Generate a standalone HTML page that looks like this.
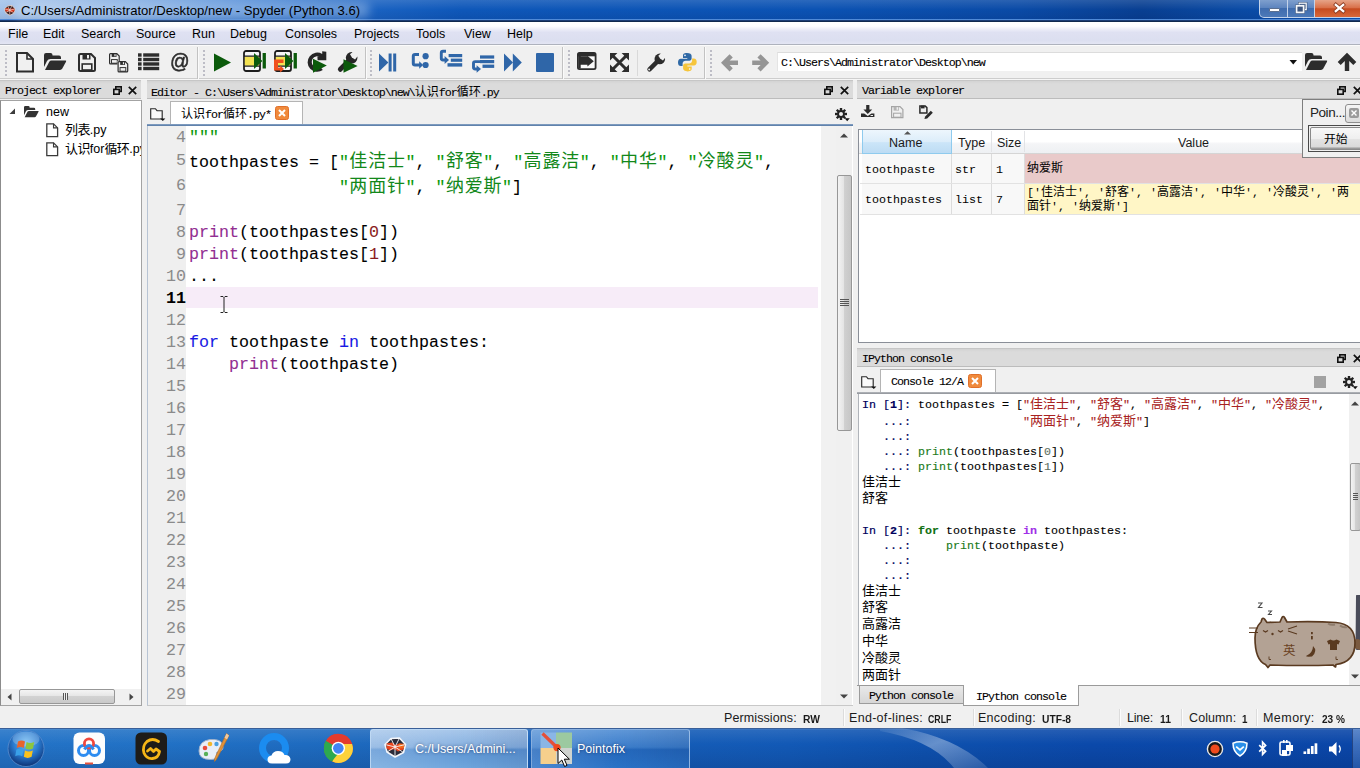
<!DOCTYPE html>
<html><head><meta charset="utf-8"><title>Spyder</title>
<style>

*{box-sizing:border-box;margin:0;padding:0}
html,body{width:1360px;height:768px;overflow:hidden;background:#f0f0f0;font-family:"Liberation Sans",sans-serif;font-size:12px;color:#000}
body{position:relative}
.a{position:absolute}
.t{position:absolute;white-space:pre;line-height:1}
svg{overflow:visible}
.cj{font-family:"Liberation Sans","Noto Sans CJK SC",sans-serif;font-weight:normal;-webkit-text-stroke:0}
.ss{font-family:"Liberation Mono",monospace;font-size:11.67px;letter-spacing:-1px;color:#000;-webkit-text-stroke:0.1px #000}
.ss .cj{font-size:12px;letter-spacing:0}
.pt{position:absolute;height:19px;background:linear-gradient(180deg,#d3d3d3 0,#dbdbdb 3px,#dbdbdb 100%);border-top:1px solid #c6c6c6;border-bottom:1px solid #bcbcbc}
.pt .t{top:5px}
.mono{font-family:"Liberation Mono",monospace}
.ln{-webkit-text-stroke:0.08px currentColor;position:absolute;left:189px;height:22px;line-height:22px;white-space:pre;font-family:"Liberation Mono",monospace;font-size:16.67px;color:#000}
.ln .cj{font-size:18px;letter-spacing:0.84px;margin-left:0.42px;margin-right:-0.42px;color:#12881a}
.num{position:absolute;left:148px;width:38px;text-align:right;height:22px;line-height:22px;font-family:"Liberation Mono",monospace;font-size:16.67px;color:#8a8a8a}
.s{color:#0a9a0a}.k{color:#1818e4}.b{color:#922e92}.n{color:#8a1c1c}
.cl{-webkit-text-stroke:0.12px currentColor;position:absolute;left:862px;height:15px;line-height:15px;white-space:pre;font-family:"Liberation Mono",monospace;font-size:11.67px;color:#000}
.cl .cj{font-size:13px}
.cp{color:#00005c;-webkit-text-stroke:0.2px #00005c}.cs{color:#a82222}.cb{color:#1a7a1a}.ck{color:#0f6f0f;font-weight:bold}.co{color:#a030e8;font-weight:bold}.cn{color:#5f6f5f}
.sb{position:absolute;top:711px;font-size:12.5px;white-space:pre;line-height:14px;color:#1a1a1a}
.sb b{font-weight:bold;font-size:11.4px}
.vc{position:absolute;font-family:"Liberation Mono",monospace;font-size:11.67px;white-space:pre;line-height:14px}
.vc .cj{font-size:12px}

.u.cj{font-size:13px;letter-spacing:-0.6px}
.ui{line-height:16px !important}

.pf.cj{font-size:11.8px}

.yc.cj{font-size:12.5px}

</style></head>
<body>
<div class="a" style="left:0;top:0;width:1360px;height:22px;background:linear-gradient(90deg,#a4c3ea 0%,#8db4e5 5%,#6a9ddd 12%,#3f80d3 19%,#1c64c3 26%,#0e57b9 34%,#0b52b3 60%,#0a4aa6 75%,#083f92 84%,#0a4aa4 91%,#0b53b5 100%)"></div><div class="a" style="left:0;top:0;width:1360px;height:22px;background:linear-gradient(180deg,rgba(255,255,255,.13) 0%,rgba(255,255,255,0) 45%,rgba(0,0,40,.10) 100%)"></div><div class="a" style="left:0;top:19px;width:1360px;height:1px;background:#4f8ad8"></div><div class="a" style="left:0;top:20px;width:1360px;height:1px;background:#1b3c74"></div><div class="a" style="left:0;top:21px;width:1360px;height:1px;background:#10294f"></div><div class="a" style="left:14px;top:2px;width:356px;height:16px;border-radius:8px;background:rgba(255,255,255,.30);filter:blur(5px)"></div><svg class="a" style="left:4px;top:5px" width="12" height="12"><g transform="scale(0.52)"><path d="M7 1.5L15.5 1L21.5 7.5L19.5 15.5L11 20L3 15L1 7.5Z" fill="#3a2020" stroke="#e9d8d4" stroke-width="1.6"/><path d="M2.5 6.5L8 5.5L11.5 8L15 6.5L20.5 7L19.5 12.5L14 14.5L10.5 12L6 13.5L2.5 11.5Z" fill="#d8381a"/><path d="M11 10L7 1.5M11 10L15.5 1M11 10L21.5 7.5M11 10L19.5 15.5M11 10L11 20M11 10L3 15M11 10L1 7.5" stroke="#f0e4e0" stroke-width="1.2" fill="none"/></g></svg><div class="t" id="title" style="left:21px;top:4px;font-size:13.1px;color:#000">C:/Users/Administrator/Desktop/new - Spyder (Python 3.6)</div><div class="a" style="left:1259px;top:0;width:101px;height:18px;border:1px solid #c3d3ea;border-top:none;border-radius:0 0 0 5px;background:linear-gradient(180deg,#7f9fcd 0%,#5d85bf 45%,#3f6cae 50%,#4d79b8 100%)"></div><div class="a" style="left:1287px;top:0;width:1px;height:17px;background:#c3d3ea"></div><div class="a" style="left:1314px;top:0;width:1px;height:17px;background:#c3d3ea"></div><div class="a" style="left:1315px;top:0;width:45px;height:17px;background:linear-gradient(180deg,#e6a488 0%,#d9714a 45%,#c64b1f 52%,#d8683a 100%)"></div><div class="a" style="left:1269px;top:8px;width:11px;height:4px;background:#fff;border:1px solid #5b6f8f;border-radius:1px"></div><svg class="a" style="left:1295px;top:2px" width="13" height="12"><rect x="4.2" y="1.2" width="7" height="6.4" fill="none" stroke="#3f5578" stroke-width="2.4"/><rect x="4.2" y="1.2" width="7" height="6.4" fill="none" stroke="#f4f7fb" stroke-width="1.3"/><rect x="1.6" y="3.8" width="7" height="6.6" fill="#3d5782" stroke="#3f5578" stroke-width="2.6"/><rect x="1.6" y="3.8" width="7" height="6.6" fill="none" stroke="#f4f7fb" stroke-width="1.7"/></svg><svg class="a" style="left:1334px;top:3px" width="11" height="10"><path d="M1.8 1.8L9.2 8.2M9.2 1.8L1.8 8.2" stroke="#8a3a20" stroke-width="3.8" stroke-linecap="square"/><path d="M1.8 1.8L9.2 8.2M9.2 1.8L1.8 8.2" stroke="#fff" stroke-width="2.3" stroke-linecap="square"/></svg><div class="a" style="left:0;top:22px;width:1360px;height:23px;background:linear-gradient(180deg,#fff 0%,#fdfdff 18%,#ecedf8 32%,#dfe1f2 45%,#dcdff0 80%,#e5e7f4 100%)"></div><div class="a" style="left:0;top:44px;width:1360px;height:1px;background:#aeb2bd"></div><div class="t" style="left:8px;top:27.5px;font-size:12.5px">File</div><div class="t" style="left:43px;top:27.5px;font-size:12.5px">Edit</div><div class="t" style="left:81px;top:27.5px;font-size:12.5px">Search</div><div class="t" style="left:136px;top:27.5px;font-size:12.5px">Source</div><div class="t" style="left:192px;top:27.5px;font-size:12.5px">Run</div><div class="t" style="left:230px;top:27.5px;font-size:12.5px">Debug</div><div class="t" style="left:285px;top:27.5px;font-size:12.5px">Consoles</div><div class="t" style="left:354px;top:27.5px;font-size:12.5px">Projects</div><div class="t" style="left:416px;top:27.5px;font-size:12.5px">Tools</div><div class="t" style="left:464px;top:27.5px;font-size:12.5px">View</div><div class="t" style="left:507px;top:27.5px;font-size:12.5px">Help</div><div class="a" style="left:0;top:45px;width:1360px;height:35px;background:#f0f0f0"></div><div class="a" style="left:0;top:45px;width:1360px;height:1px;background:#fbfbfb"></div><div class="a" style="left:0;top:78px;width:1360px;height:1px;background:#cdcdcd"></div><div class="a" style="left:0;top:79px;width:1360px;height:1px;background:#f6f6f6"></div><svg class="a" style="left:5px;top:50px" width="3" height="26"><rect x="0" y="0" width="2" height="2" fill="#bdbdc6"/><rect x="0" y="4" width="2" height="2" fill="#bdbdc6"/><rect x="0" y="8" width="2" height="2" fill="#bdbdc6"/><rect x="0" y="12" width="2" height="2" fill="#bdbdc6"/><rect x="0" y="16" width="2" height="2" fill="#bdbdc6"/><rect x="0" y="20" width="2" height="2" fill="#bdbdc6"/><rect x="0" y="24" width="2" height="2" fill="#bdbdc6"/></svg><svg class="a" style="left:16px;top:52px" width="19" height="21"><path d="M1 1H11L17 7V19.5H1Z" fill="none" stroke="#2d2d2d" stroke-width="2"/><path d="M11 1V7H17" fill="none" stroke="#2d2d2d" stroke-width="1.6"/></svg><svg class="a" style="left:44px;top:53px" width="23" height="18"><path d="M0 14V2Q0 0 2 0H6.5Q8.5 0 8.5 2V2.5H15Q17 2.5 17 4.5V6H6.5Q4 6 3 8Z" fill="#2d2d2d"/><path d="M1 17L5.3 8.7Q6 7.5 7.5 7.5H21.5Q22.6 7.5 22 8.7L18.3 15.6Q17.5 17 16 17Z" fill="#2d2d2d"/></svg><svg class="a" style="left:78px;top:53px" width="18" height="19"><path d="M1 2.5Q1 1 2.5 1H13L17 5V16.5Q17 18 15.5 18H2.5Q1 18 1 16.5Z" fill="none" stroke="#2d2d2d" stroke-width="2"/><rect x="4.5" y="1" width="8" height="5.5" fill="#2d2d2d"/><rect x="9" y="2" width="2" height="3.4" fill="#f0f0f0"/><rect x="4.2" y="11" width="9.6" height="6" fill="none" stroke="#2d2d2d" stroke-width="1.6"/></svg><svg class="a" style="left:109px;top:53px" width="20" height="19"><g transform="scale(0.6)"><path d="M1 2.5Q1 1 2.5 1H13L17 5V16.5Q17 18 15.5 18H2.5Q1 18 1 16.5Z" fill="none" stroke="#2d2d2d" stroke-width="2"/><rect x="4.5" y="1" width="8" height="5.5" fill="#2d2d2d"/><rect x="9" y="2" width="2" height="3.4" fill="#f0f0f0"/><rect x="4.2" y="11" width="9.6" height="6" fill="none" stroke="#2d2d2d" stroke-width="1.6"/></g><g transform="translate(8.5,8) scale(0.6)"><rect x="0" y="0" width="18" height="19" fill="#f0f0f0"/><path d="M1 2.5Q1 1 2.5 1H13L17 5V16.5Q17 18 15.5 18H2.5Q1 18 1 16.5Z" fill="none" stroke="#2d2d2d" stroke-width="2"/><rect x="4.5" y="1" width="8" height="5.5" fill="#2d2d2d"/><rect x="9" y="2" width="2" height="3.4" fill="#f0f0f0"/><rect x="4.2" y="11" width="9.6" height="6" fill="none" stroke="#2d2d2d" stroke-width="1.6"/></g></svg><svg class="a" style="left:138px;top:53px" width="22" height="18"><rect x="0" y="0.3" width="3.6" height="3.4" fill="#2d2d2d"/><rect x="5.2" y="0.3" width="16" height="3.4" fill="#2d2d2d"/><rect x="0" y="4.8" width="3.6" height="3.4" fill="#2d2d2d"/><rect x="5.2" y="4.8" width="16" height="3.4" fill="#2d2d2d"/><rect x="0" y="9.3" width="3.6" height="3.4" fill="#2d2d2d"/><rect x="5.2" y="9.3" width="16" height="3.4" fill="#2d2d2d"/><rect x="0" y="13.8" width="3.6" height="3.4" fill="#2d2d2d"/><rect x="5.2" y="13.8" width="16" height="3.4" fill="#2d2d2d"/></svg><div class="t" style="left:170px;top:50px;font-size:21px;color:#2d2d2d;-webkit-text-stroke:0.6px #2d2d2d;transform:scaleX(0.92);transform-origin:0 0">@</div><div class="a" style="left:197px;top:47px;width:1px;height:32px;background:#c2c2c2"></div><div class="a" style="left:198px;top:47px;width:1px;height:32px;background:#fafafa"></div><svg class="a" style="left:203px;top:50px" width="3" height="26"><rect x="0" y="0" width="2" height="2" fill="#bdbdc6"/><rect x="0" y="4" width="2" height="2" fill="#bdbdc6"/><rect x="0" y="8" width="2" height="2" fill="#bdbdc6"/><rect x="0" y="12" width="2" height="2" fill="#bdbdc6"/><rect x="0" y="16" width="2" height="2" fill="#bdbdc6"/><rect x="0" y="20" width="2" height="2" fill="#bdbdc6"/><rect x="0" y="24" width="2" height="2" fill="#bdbdc6"/></svg><svg class="a" style="left:214px;top:53px" width="18" height="19"><path d="M0 0.5L17 9.5L0 18.6Z" fill="#0b5a0b"/></svg><svg class="a" style="left:243px;top:50px" width="24" height="23"><rect x="1" y="1" width="16" height="20" rx="2" fill="#f6f6f6" stroke="#1e1e1e" stroke-width="1.8"/><rect x="1.8" y="6.6" width="14.4" height="9.2" fill="#f3e252"/><path d="M1 6.2H17M1 16.2H17" stroke="#1e1e1e" stroke-width="1.3"/><path d="M11 3L19.4 11L11 19Z" fill="#0b5a0b"/><rect x="19.6" y="3" width="3.3" height="15.5" fill="#0b5a0b"/></svg><svg class="a" style="left:274px;top:50px" width="24" height="23"><rect x="1" y="1" width="16" height="20" rx="2" fill="#f6f6f6" stroke="#1e1e1e" stroke-width="1.8"/><rect x="1.8" y="6.6" width="14.4" height="9.2" fill="#f3e252"/><path d="M1 6.2H17M1 16.2H17" stroke="#1e1e1e" stroke-width="1.3"/><path d="M11 3L19.4 11L11 19Z" fill="#0b5a0b"/><rect x="19.6" y="3" width="3.3" height="15.5" fill="#0b5a0b"/><path d="M0 9.5H9.5V13H4V17.6H6.2V15.4L10 19L6.2 22.6V20.6H0Z" fill="#f0501e"/></svg><svg class="a" style="left:307px;top:51px" width="20" height="22"><path d="M15.2 3V0.3L19.3 0.8V9.3H10.6L10.4 5.6L12.6 5.5A5.8 5.8 0 1 0 13.4 16L15.8 19A9.6 9.6 0 1 1 15.2 3Z" fill="#262626"/><path d="M6 7.8L19.8 14.6L6 21.8Z" fill="#0b5a0b"/></svg><svg class="a" style="left:337px;top:52px" width="21" height="21"><g transform="translate(0,-0.5) scale(1.1)"><path d="M3 16.2L11 8.2" stroke="#262626" stroke-width="4.4" stroke-linecap="round" fill="none"/><circle cx="13.3" cy="5.7" r="5.3" fill="#262626"/><path d="M13.6 5.4L11.8 2.6L16 -1.2L20 2.8L16.4 7.2Z" fill="#f0f0f0"/></g><path d="M6.5 7.2L20.6 14L6.5 20.8Z" fill="#0b5a0b"/></svg><div class="a" style="left:365px;top:47px;width:1px;height:32px;background:#c2c2c2"></div><div class="a" style="left:366px;top:47px;width:1px;height:32px;background:#fafafa"></div><svg class="a" style="left:370px;top:50px" width="3" height="26"><rect x="0" y="0" width="2" height="2" fill="#bdbdc6"/><rect x="0" y="4" width="2" height="2" fill="#bdbdc6"/><rect x="0" y="8" width="2" height="2" fill="#bdbdc6"/><rect x="0" y="12" width="2" height="2" fill="#bdbdc6"/><rect x="0" y="16" width="2" height="2" fill="#bdbdc6"/><rect x="0" y="20" width="2" height="2" fill="#bdbdc6"/><rect x="0" y="24" width="2" height="2" fill="#bdbdc6"/></svg><svg class="a" style="left:379px;top:53px" width="18" height="19"><path d="M0 0.5L9.4 9.5L0 18.6Z" fill="#2f66a8"/><rect x="9.6" y="0.5" width="3" height="18" fill="#2f66a8"/><rect x="14.2" y="0.5" width="3" height="18" fill="#2f66a8"/></svg><svg class="a" style="left:412px;top:53px" width="17" height="16"><path d="M7 1.5H3Q1.3 1.5 1.3 3.2V10.3Q1.3 12 3 12H8" fill="none" stroke="#2f66a8" stroke-width="3"/><path d="M7.2 8.2L11.2 12L7.2 15.8Z" fill="#2f66a8"/><circle cx="13.6" cy="3.2" r="3.1" fill="#2f66a8"/><circle cx="13.6" cy="12" r="3.1" fill="#2f66a8"/></svg><svg class="a" style="left:440px;top:50px" width="23" height="18"><path d="M6 1.3H3Q1.3 1.3 1.3 3V8.3Q1.3 10 3 10H5.5" fill="none" stroke="#2f66a8" stroke-width="2.9"/><path d="M4.6 6L9 10L4.6 14Z" fill="#2f66a8"/><rect x="8.6" y="4" width="13.6" height="3.2" fill="#2f66a8"/><rect x="10.8" y="8.6" width="11.4" height="3.2" fill="#2f66a8"/><rect x="7.5" y="13.2" width="14.7" height="3.4" fill="#2f66a8"/></svg><svg class="a" style="left:472px;top:55px" width="23" height="18"><rect x="8" y="0.4" width="14.2" height="3.2" fill="#2f66a8"/><rect x="8" y="5" width="14.2" height="3.2" fill="#2f66a8"/><rect x="10.5" y="9.6" width="11.7" height="3.3" fill="#2f66a8"/><path d="M8 6.6H3.2Q1.5 6.6 1.5 8.3V12.3Q1.5 14 3.2 14H5.5" fill="none" stroke="#2f66a8" stroke-width="2.9"/><path d="M4.6 10.2L9 14L4.6 17.8Z" fill="#2f66a8"/></svg><svg class="a" style="left:504px;top:53px" width="19" height="19"><path d="M0 0.5L9 9.5L0 18.6Z" fill="#2f66a8"/><path d="M8.8 0.5L17.8 9.5L8.8 18.6Z" fill="#2f66a8"/></svg><div class="a" style="left:536px;top:53px;width:18px;height:19px;background:#2f66a8;border-radius:1px"></div><div class="a" style="left:562px;top:47px;width:1px;height:32px;background:#c2c2c2"></div><div class="a" style="left:563px;top:47px;width:1px;height:32px;background:#fafafa"></div><svg class="a" style="left:568px;top:50px" width="3" height="26"><rect x="0" y="0" width="2" height="2" fill="#bdbdc6"/><rect x="0" y="4" width="2" height="2" fill="#bdbdc6"/><rect x="0" y="8" width="2" height="2" fill="#bdbdc6"/><rect x="0" y="12" width="2" height="2" fill="#bdbdc6"/><rect x="0" y="16" width="2" height="2" fill="#bdbdc6"/><rect x="0" y="20" width="2" height="2" fill="#bdbdc6"/><rect x="0" y="24" width="2" height="2" fill="#bdbdc6"/></svg><svg class="a" style="left:577px;top:52px" width="20" height="18"><rect x="0.9" y="0.9" width="17.7" height="16.2" rx="1.6" fill="#fafafa" stroke="#2d2d2d" stroke-width="1.8"/><rect x="0.9" y="0.9" width="17.7" height="3.4" fill="#2d2d2d"/><rect x="1.5" y="4" width="2.2" height="12.5" fill="#2d2d2d"/><path d="M3 4.3H10.4V3.8L16.8 9.2L10.4 14.6V12.8H3Z" fill="#2d2d2d"/></svg><svg class="a" style="left:610px;top:53px" width="19" height="19"><path d="M3 3L16 16M16 3L3 16" stroke="#2d2d2d" stroke-width="3" fill="none"/><path d="M0 0H7.4L0 7.4ZM19 0V7.4L11.6 0ZM0 19V11.6L7.4 19ZM19 19H11.6L19 11.6Z" fill="#2d2d2d"/></svg><div class="a" style="left:637px;top:50px;width:1px;height:26px;background:#d9d9d9"></div><svg class="a" style="left:646px;top:53px" width="20" height="19"><g transform="translate(0.5,0.2)"><path d="M3 16.2L11 8.2" stroke="#2d2d2d" stroke-width="4.4" stroke-linecap="round" fill="none"/><circle cx="13.3" cy="5.7" r="5.3" fill="#2d2d2d"/><path d="M13.6 5.4L11.8 2.6L16 -1.2L20 2.8L16.4 7.2Z" fill="#f0f0f0"/><circle cx="2.6" cy="16.3" r="0.9" fill="#f0f0f0"/></g></svg><svg class="a" style="left:678px;top:53px" width="19" height="19"><path d="M9 0C5.5 0 5 1.4 5 2.8V5H9.3V5.8H2.8C1 5.8 0 7.4 0 9.4C0 11.6 1 13 2.8 13H4.6V10.6C4.6 9 6 7.8 7.5 7.8H11.4C12.7 7.8 13.6 6.8 13.6 5.6V2.8C13.6 1.2 12 0 9 0Z" fill="#2f69a6"/><path d="M9.7 18.4C13.2 18.4 13.7 17 13.7 15.6V13.4H9.4V12.6H15.9C17.7 12.6 18.7 11 18.7 9C18.7 6.8 17.7 5.4 15.9 5.4H14.1V7.8C14.1 9.4 12.7 10.6 11.2 10.6H7.3C6 10.6 5.1 11.6 5.1 12.8V15.6C5.1 17.2 6.7 18.4 9.7 18.4Z" fill="#f6c53b"/><circle cx="7" cy="2.4" r="0.8" fill="#fff"/><circle cx="11.7" cy="16" r="0.8" fill="#fff"/></svg><div class="a" style="left:704px;top:47px;width:1px;height:32px;background:#c2c2c2"></div><div class="a" style="left:705px;top:47px;width:1px;height:32px;background:#fafafa"></div><svg class="a" style="left:710px;top:50px" width="3" height="26"><rect x="0" y="0" width="2" height="2" fill="#bdbdc6"/><rect x="0" y="4" width="2" height="2" fill="#bdbdc6"/><rect x="0" y="8" width="2" height="2" fill="#bdbdc6"/><rect x="0" y="12" width="2" height="2" fill="#bdbdc6"/><rect x="0" y="16" width="2" height="2" fill="#bdbdc6"/><rect x="0" y="20" width="2" height="2" fill="#bdbdc6"/><rect x="0" y="24" width="2" height="2" fill="#bdbdc6"/></svg><svg class="a" style="left:721px;top:54px" width="18" height="18"><path d="M8.6 0.2L11.8 3.4L8.6 6.6H17V11H8.6L11.8 14.2L8.6 17.4L0 8.8Z" fill="#959595"/></svg><svg class="a" style="left:752px;top:54px" width="18" height="18"><g transform="translate(17.2,0) scale(-1,1)"><path d="M8.6 0.2L11.8 3.4L8.6 6.6H17V11H8.6L11.8 14.2L8.6 17.4L0 8.8Z" fill="#959595"/></g></svg><div class="a" style="left:777px;top:52px;width:525px;height:19px;background:#fff;border-top:1px solid #dcdcdc;border-left:1px solid #e4e4e4"></div><div class="t ss" style="left:781px;top:58px">C:\Users\Administrator\Desktop\new</div><svg class="a" style="left:1289px;top:60px" width="9" height="5"><path d="M0.5 0H8L4.25 4.5Z" fill="#111"/></svg><svg class="a" style="left:1305px;top:53px" width="23" height="18"><path d="M0 14V2Q0 0 2 0H6.5Q8.5 0 8.5 2V2.5H15Q17 2.5 17 4.5V6H6.5Q4 6 3 8Z" fill="#2d2d2d"/><path d="M1 17L5.3 8.7Q6 7.5 7.5 7.5H21.5Q22.6 7.5 22 8.7L18.3 15.6Q17.5 17 16 17Z" fill="#2d2d2d"/></svg><svg class="a" style="left:1338px;top:53px" width="19" height="19"><path d="M9 -0.3L18.3 9L15.3 12L11.2 7.9V18H6.8V7.9L2.7 12L-0.3 9Z" fill="#2d2d2d"/></svg>
<div class="pt" style="left:0;top:80px;width:141px"><div class="t ss" style="left:5px">Project explorer</div></div><svg class="a" style="left:113px;top:86px" width="9" height="9"><rect x="2.8" y="0.8" width="5.4" height="4.6" fill="none" stroke="#111" stroke-width="1.6"/><rect x="0.8" y="3.4" width="5.4" height="4.8" fill="#d8d8d8" stroke="#111" stroke-width="1.6"/></svg><svg class="a" style="left:128px;top:86px" width="9" height="9"><path d="M0.8 0.8L8.2 8.2M8.2 0.8L0.8 8.2" stroke="#111" stroke-width="1.7"/></svg><div class="a" style="left:0;top:100px;width:142px;height:606px;background:#fff;border:1px solid #a3a3a3;border-left:1px solid #8c8c8c"></div><svg class="a" style="left:9px;top:108px" width="7" height="7"><path d="M6 0.5V6H0.5Z" fill="#3c3c3c"/></svg><svg class="a" style="left:24px;top:106px" width="16" height="12"><g transform="scale(0.66)"><path d="M0 14V2Q0 0 2 0H6.5Q8.5 0 8.5 2V2.5H15Q17 2.5 17 4.5V6H6.5Q4 6 3 8Z" fill="#333"/><path d="M1 17L5.3 8.7Q6 7.5 7.5 7.5H21.5Q22.6 7.5 22 8.7L18.3 15.6Q17.5 17 16 17Z" fill="#333"/></g></svg><div class="t" style="left:46px;top:106px;font-size:12.5px">new</div><svg class="a" style="left:46px;top:123px" width="13" height="15"><path d="M0.8 0.8H7.5L11.6 4.9V13.7H0.8Z" fill="#fff" stroke="#3a3a3a" stroke-width="1.3"/><path d="M7.5 0.8V4.9H11.6" fill="none" stroke="#3a3a3a" stroke-width="1.1"/></svg><svg class="a" style="left:46px;top:142px" width="13" height="15"><path d="M0.8 0.8H7.5L11.6 4.9V13.7H0.8Z" fill="#fff" stroke="#3a3a3a" stroke-width="1.3"/><path d="M7.5 0.8V4.9H11.6" fill="none" stroke="#3a3a3a" stroke-width="1.1"/></svg><div class="t ui" style="left:65px;top:122px;font-size:12.5px"><span class="cj u">列表</span>.py</div><div class="a" style="left:65px;top:143px;width:76px;height:18px;overflow:hidden"><div class="t ui" style="left:0;top:-2px;font-size:12.5px"><span class="cj u">认识</span>for<span class="cj u">循环</span>.py</div></div><div class="a" style="left:1px;top:689px;width:140px;height:16px;background:#f0f0f0"></div><svg class="a" style="left:7px;top:693px" width="5" height="8"><path d="M4.5 0.5V7.5L0.5 4Z" fill="#444"/></svg><svg class="a" style="left:129px;top:693px" width="5" height="8"><path d="M0.5 0.5V7.5L4.5 4Z" fill="#444"/></svg><div class="a" style="left:19px;top:689px;width:96px;height:15px;border:1px solid #979797;border-radius:2px;background:linear-gradient(180deg,#f4f4f4 0%,#e6e6e6 45%,#d2d2d2 50%,#c9c9c9 100%)"></div><div class="a" style="left:63px;top:693px;width:1px;height:7px;background:#555;box-shadow:2px 0 0 #555,4px 0 0 #555,1px 0 0 #eee,3px 0 0 #eee"></div>
<div class="pt" style="left:147px;top:80px;width:706px"><div class="t ss" style="left:4px">Editor - C:\Users\Administrator\Desktop\new\<span class="cj">认识</span>for<span class="cj">循环</span>.py</div></div><svg class="a" style="left:824px;top:86px" width="9" height="9"><rect x="2.8" y="0.8" width="5.4" height="4.6" fill="none" stroke="#111" stroke-width="1.6"/><rect x="0.8" y="3.4" width="5.4" height="4.8" fill="#d8d8d8" stroke="#111" stroke-width="1.6"/></svg><svg class="a" style="left:840px;top:86px" width="9" height="9"><path d="M0.8 0.8L8.2 8.2M8.2 0.8L0.8 8.2" stroke="#111" stroke-width="1.7"/></svg><svg class="a" style="left:150px;top:108px" width="17" height="14"><path d="M0.7 11V0.7H5.4L7 2.7H12.2V11Z" fill="#fafafa" stroke="#2a2a2a" stroke-width="1.15"/><path d="M10.2 10.4H15.4L12.8 13Z" fill="#111"/></svg><div class="a" style="left:170px;top:101px;width:133px;height:24px;background:#fff;border:1px solid #b4b4b4;border-bottom:none"></div><div class="a" style="left:147px;top:124px;width:706px;height:2px;background:linear-gradient(180deg,#8aa5c6,#5377a3)"></div><div class="t ss" style="left:181px;top:108px"><span class="cj">认识</span>for<span class="cj">循环</span>.py*</div><svg class="a" style="left:275px;top:106px" width="14" height="14"><rect x="0.5" y="0.5" width="13" height="13" rx="2" fill="#f08a3c" stroke="#e0702a"/><path d="M4 4L10 10M10 4L4 10" stroke="#fff" stroke-width="2"/></svg><svg class="a" style="left:835px;top:108px" width="16" height="15"><g transform="translate(6,6)" fill="#222"><rect x="-1.2" y="-6" width="2.4" height="2.8" transform="rotate(0)"/><rect x="-1.2" y="-6" width="2.4" height="2.8" transform="rotate(45)"/><rect x="-1.2" y="-6" width="2.4" height="2.8" transform="rotate(90)"/><rect x="-1.2" y="-6" width="2.4" height="2.8" transform="rotate(135)"/><rect x="-1.2" y="-6" width="2.4" height="2.8" transform="rotate(180)"/><rect x="-1.2" y="-6" width="2.4" height="2.8" transform="rotate(225)"/><rect x="-1.2" y="-6" width="2.4" height="2.8" transform="rotate(270)"/><rect x="-1.2" y="-6" width="2.4" height="2.8" transform="rotate(315)"/><circle r="3.9"/><circle r="2" fill="#f0f0f0"/></g><path d="M9.6 10.2H14.8L12.2 13.2Z" fill="#111"/></svg><div class="a" style="left:147px;top:126px;width:706px;height:580px;background:#fff;border-left:1px solid #b8c4d4;border-bottom:1px solid #c8c8c8"></div><div class="a" style="left:148px;top:126px;width:38px;height:579px;background:#efefef"></div><div class="a" style="left:186px;top:287px;width:632px;height:21px;background:#f7ecf8"></div><div class="a" style="left:821px;top:126px;width:15px;height:579px;background:#f1f1f1"></div><div class="a" style="left:836px;top:126px;width:16px;height:579px;background:#f0f0f0"></div><svg class="a" style="left:840.0px;top:133px" width="8" height="5"><path d="M0 4.5L4 0.5L8 4.5Z" fill="#444"/></svg><svg class="a" style="left:840.0px;top:694px" width="8" height="5"><path d="M0 0.5L4 4.5L8 0.5Z" fill="#444"/></svg><div class="a" style="left:837px;top:175px;width:15px;height:256px;border:1px solid #979797;border-radius:2px;background:linear-gradient(90deg,#f3f3f3 0%,#e4e4e4 45%,#d0d0d0 50%,#c6c6c6 100%)"></div><div class="a" style="left:840px;top:299px;width:9px;height:1px;background:#555;box-shadow:0 2px 0 #555,0 4px 0 #555,0 6px 0 #555"></div><div class="num" style="top:126.6px">4</div><div class="ln" style="top:126.6px"><span class="s">"""</span></div><div class="num" style="top:149.6px">5</div><div class="ln" style="top:149.6px">toothpastes = [<span class="s">"<span class="cj">佳洁士</span>"</span>, <span class="s">"<span class="cj">舒客</span>"</span>, <span class="s">"<span class="cj">高露洁</span>"</span>, <span class="s">"<span class="cj">中华</span>"</span>, <span class="s">"<span class="cj">冷酸灵</span>"</span>,</div><div class="num" style="top:174.6px">6</div><div class="ln" style="top:174.6px">               <span class="s">"<span class="cj">两面针</span>"</span>, <span class="s">"<span class="cj">纳爱斯</span>"</span>]</div><div class="num" style="top:199.6px">7</div><div class="num" style="top:221.6px">8</div><div class="ln" style="top:221.6px"><span class="b">print</span>(toothpastes[<span class="n">0</span>])</div><div class="num" style="top:243.6px">9</div><div class="ln" style="top:243.6px"><span class="b">print</span>(toothpastes[<span class="n">1</span>])</div><div class="num" style="top:265.6px">10</div><div class="ln" style="top:265.6px">...</div><div class="num" style="top:287.6px;color:#000;font-weight:bold">11</div><div class="num" style="top:309.6px">12</div><div class="num" style="top:331.6px">13</div><div class="ln" style="top:331.6px"><span class="k">for</span> toothpaste <span class="k">in</span> toothpastes:</div><div class="num" style="top:353.6px">14</div><div class="ln" style="top:353.6px">    <span class="b">print</span>(toothpaste)</div><div class="num" style="top:375.6px">15</div><div class="num" style="top:397.6px">16</div><div class="num" style="top:419.6px">17</div><div class="num" style="top:441.6px">18</div><div class="num" style="top:463.6px">19</div><div class="num" style="top:485.6px">20</div><div class="num" style="top:507.6px">21</div><div class="num" style="top:529.6px">22</div><div class="num" style="top:551.6px">23</div><div class="num" style="top:573.6px">24</div><div class="num" style="top:595.6px">25</div><div class="num" style="top:617.6px">26</div><div class="num" style="top:639.6px">27</div><div class="num" style="top:661.6px">28</div><div class="num" style="top:683.6px">29</div><svg class="a" style="left:220px;top:296px" width="8" height="17"><path d="M0.5 0.5H3L4 1.5L5 0.5H7.5M4 1.5V15.5M0.5 16.5H3L4 15.5L5 16.5H7.5" fill="none" stroke="#222" stroke-width="1"/></svg>
<div class="pt" style="left:857px;top:80px;width:503px"><div class="t ss" style="left:5px">Variable explorer</div></div><svg class="a" style="left:1337px;top:86px" width="9" height="9"><rect x="2.8" y="0.8" width="5.4" height="4.6" fill="none" stroke="#111" stroke-width="1.6"/><rect x="0.8" y="3.4" width="5.4" height="4.8" fill="#d8d8d8" stroke="#111" stroke-width="1.6"/></svg><svg class="a" style="left:1353px;top:86px" width="9" height="9"><path d="M0.8 0.8L8.2 8.2M8.2 0.8L0.8 8.2" stroke="#111" stroke-width="1.7"/></svg><svg class="a" style="left:861px;top:105px" width="14" height="13"><path d="M5.2 0H8.4V4.6H11.2L6.8 9L2.4 4.6H5.2Z" fill="#2b2b2b"/><path d="M0 8.6H3.2L6.8 11L10.4 8.6H13.4V12H0Z" fill="#2b2b2b"/><rect x="9.6" y="10" width="2.4" height="1" fill="#f0f0f0"/></svg><svg class="a" style="left:891px;top:106px" width="13" height="13"><path d="M0.6 0.6H9L11.9 3.5V11.6H0.6Z" fill="none" stroke="#a4a4a4" stroke-width="1.2"/><rect x="2.6" y="0.8" width="5.4" height="3.8" fill="#b4b4b4"/><rect x="5.6" y="1.2" width="1.6" height="2.6" fill="#f0f0f0"/><rect x="2.6" y="7.2" width="7.4" height="4" fill="none" stroke="#a4a4a4" stroke-width="1"/></svg><svg class="a" style="left:919px;top:105px" width="15" height="15"><path d="M0.9 0.9H6.2L7.9 2.6V7.9H0.9Z" fill="none" stroke="#2b2b2b" stroke-width="1.5"/><rect x="2" y="0.6" width="3.6" height="2.8" fill="#2b2b2b"/><path d="M5.4 14L6.2 11.4L11.8 5.8L13.8 7.8L8.2 13.4Z" fill="#2b2b2b"/></svg><div class="a" style="left:858px;top:129px;width:503px;height:214px;background:#fff;border:1px solid #8a8f98"></div><div class="a" style="left:859px;top:130px;width:501px;height:24px;background:linear-gradient(180deg,#ffffff 0%,#ffffff 50%,#f4f5f7 60%,#eef0f3 100%);border-bottom:1px solid #d5d5d5"></div><div class="a" style="left:862px;top:130px;width:90px;height:24px;background:linear-gradient(180deg,#edf6fd 0%,#dcedfa 50%,#cbe5f8 55%,#bddcf4 100%);border:1px solid #8fcbee;border-top:none"></div><svg class="a" style="left:904px;top:131px" width="7" height="4"><path d="M0 3.6L3.5 0.3L7 3.6Z" fill="#555"/></svg><div class="a" style="left:991px;top:131px;width:1px;height:21px;background:#e2e3e6"></div><div class="a" style="left:1024px;top:131px;width:1px;height:21px;background:#e2e3e6"></div><div class="t" style="left:889px;top:137px;font-size:12.5px;color:#1a1a1a">Name</div><div class="t" style="left:958px;top:137px;font-size:12.5px;color:#1a1a1a">Type</div><div class="t" style="left:997px;top:137px;font-size:12.5px;color:#1a1a1a">Size</div><div class="t" style="left:1178px;top:137px;font-size:12.5px;color:#1a1a1a">Value</div><div class="a" style="left:862px;top:154px;width:163px;height:61px;background:#f8f8f8"></div><div class="a" style="left:1025px;top:154px;width:335px;height:30px;background:#e9caca"></div><div class="a" style="left:1025px;top:184px;width:335px;height:31px;background:#fff6c6"></div><div class="a" style="left:951px;top:154px;width:1px;height:61px;background:#dcdcdc"></div><div class="a" style="left:991px;top:154px;width:1px;height:61px;background:#dcdcdc"></div><div class="a" style="left:1024px;top:154px;width:1px;height:61px;background:#dcdcdc"></div><div class="a" style="left:860px;top:183px;width:500px;height:1px;background:#e2e2e2"></div><div class="a" style="left:860px;top:214px;width:500px;height:1px;background:#e2e2e2"></div><div class="vc" style="left:865px;top:163px">toothpaste</div><div class="vc" style="left:955px;top:163px">str</div><div class="vc" style="left:996px;top:163px">1</div><div class="vc" style="left:1027px;top:161px"><span class="cj">纳爱斯</span></div><div class="vc" style="left:865px;top:193px">toothpastes</div><div class="vc" style="left:955px;top:193px">list</div><div class="vc" style="left:996px;top:193px">7</div><div class="vc" style="left:1027px;top:185px">['<span class="cj">佳洁士</span>', '<span class="cj">舒客</span>', '<span class="cj">高露洁</span>', '<span class="cj">中华</span>', '<span class="cj">冷酸灵</span>', '<span class="cj">两</span></div><div class="vc" style="left:1027px;top:199px"><span class="cj">面针</span>', '<span class="cj">纳爱斯</span>']</div><div class="pt" style="left:857px;top:348px;width:503px"><div class="t ss" style="left:5px">IPython console</div></div><svg class="a" style="left:1337px;top:354px" width="9" height="9"><rect x="2.8" y="0.8" width="5.4" height="4.6" fill="none" stroke="#111" stroke-width="1.6"/><rect x="0.8" y="3.4" width="5.4" height="4.8" fill="#d8d8d8" stroke="#111" stroke-width="1.6"/></svg><svg class="a" style="left:1353px;top:354px" width="9" height="9"><path d="M0.8 0.8L8.2 8.2M8.2 0.8L0.8 8.2" stroke="#111" stroke-width="1.7"/></svg><svg class="a" style="left:861px;top:376px" width="17" height="14"><path d="M0.7 11V0.7H5.4L7 2.7H12.2V11Z" fill="#fafafa" stroke="#2a2a2a" stroke-width="1.15"/><path d="M10.2 10.4H15.4L12.8 13Z" fill="#111"/></svg><div class="a" style="left:880px;top:369px;width:116px;height:24px;background:#fff;border:1px solid #b4b4b4;border-bottom:none"></div><div class="a" style="left:857px;top:392px;width:503px;height:2px;background:linear-gradient(180deg,#b5b8bd,#8e9298)"></div><div class="t ss" style="left:891px;top:377px">Console 12/A</div><svg class="a" style="left:968px;top:374px" width="14" height="14"><rect x="0.5" y="0.5" width="13" height="13" rx="2" fill="#f08a3c" stroke="#e0702a"/><path d="M4 4L10 10M10 4L4 10" stroke="#fff" stroke-width="2"/></svg><div class="a" style="left:1314px;top:376px;width:12px;height:12px;background:#a2a2a2"></div><svg class="a" style="left:1343px;top:376px" width="16" height="15"><g transform="translate(6,6)" fill="#222"><rect x="-1.2" y="-6" width="2.4" height="2.8" transform="rotate(0)"/><rect x="-1.2" y="-6" width="2.4" height="2.8" transform="rotate(45)"/><rect x="-1.2" y="-6" width="2.4" height="2.8" transform="rotate(90)"/><rect x="-1.2" y="-6" width="2.4" height="2.8" transform="rotate(135)"/><rect x="-1.2" y="-6" width="2.4" height="2.8" transform="rotate(180)"/><rect x="-1.2" y="-6" width="2.4" height="2.8" transform="rotate(225)"/><rect x="-1.2" y="-6" width="2.4" height="2.8" transform="rotate(270)"/><rect x="-1.2" y="-6" width="2.4" height="2.8" transform="rotate(315)"/><circle r="3.9"/><circle r="2" fill="#f0f0f0"/></g><path d="M9.6 10.2H14.8L12.2 13.2Z" fill="#111"/></svg><div class="a" style="left:858px;top:394px;width:502px;height:292px;background:#fff;border-left:1px solid #b0b4ba"></div><div class="a" style="left:857px;top:685px;width:503px;height:1px;background:#9a9a9a"></div><div class="a" style="left:1349px;top:394px;width:12px;height:291px;background:#f0f0f0"></div><svg class="a" style="left:1351.0px;top:401px" width="8" height="5"><path d="M0 4.5L4 0.5L8 4.5Z" fill="#444"/></svg><svg class="a" style="left:1351.0px;top:674px" width="8" height="5"><path d="M0 0.5L4 4.5L8 0.5Z" fill="#444"/></svg><div class="a" style="left:1350px;top:463px;width:11px;height:68px;border:1px solid #979797;border-radius:2px;background:linear-gradient(90deg,#f3f3f3 0%,#e4e4e4 45%,#d0d0d0 50%,#c6c6c6 100%)"></div><div class="a" style="left:1353px;top:493px;width:5px;height:1px;background:#555;box-shadow:0 2px 0 #555,0 4px 0 #555,0 6px 0 #555"></div><div class="cl" style="top:395.5px"><span class="cp">In [<b>1</b>]: </span>toothpastes = [<span class="cs">"<span class="cj">佳洁士</span>"</span>, <span class="cs">"<span class="cj">舒客</span>"</span>, <span class="cs">"<span class="cj">高露洁</span>"</span>, <span class="cs">"<span class="cj">中华</span>"</span>, <span class="cs">"<span class="cj">冷酸灵</span>"</span>,</div><div class="cl" style="top:412.5px"><span class="cp">   ...: </span>               <span class="cs">"<span class="cj">两面针</span>"</span>, <span class="cs">"<span class="cj">纳爱斯</span>"</span>]</div><div class="cl" style="top:429.5px"><span class="cp">   ...: </span></div><div class="cl" style="top:444.5px"><span class="cp">   ...: </span><span class="cb">print</span>(toothpastes[<span class="cn">0</span>])</div><div class="cl" style="top:459.5px"><span class="cp">   ...: </span><span class="cb">print</span>(toothpastes[<span class="cn">1</span>])</div><div class="cl" style="top:473.5px"><span class="cj">佳洁士</span></div><div class="cl" style="top:489.5px"><span class="cj">舒客</span></div><div class="cl" style="top:523.5px"><span class="cp">In [<b>2</b>]: </span><span class="ck">for</span> toothpaste <span class="co">in</span> toothpastes:</div><div class="cl" style="top:538.5px"><span class="cp">   ...: </span>    <span class="cb">print</span>(toothpaste)</div><div class="cl" style="top:553.5px"><span class="cp">   ...: </span></div><div class="cl" style="top:568.5px"><span class="cp">   ...: </span></div><div class="cl" style="top:582.5px"><span class="cj">佳洁士</span></div><div class="cl" style="top:598.5px"><span class="cj">舒客</span></div><div class="cl" style="top:615.5px"><span class="cj">高露洁</span></div><div class="cl" style="top:632.5px"><span class="cj">中华</span></div><div class="cl" style="top:649.5px"><span class="cj">冷酸灵</span></div><div class="cl" style="top:666.5px"><span class="cj">两面针</span></div><div class="a" style="left:859px;top:686px;width:105px;height:18px;border:1px solid #9c9c9c;border-top:none;background:linear-gradient(180deg,#e9e9e9,#d6d6d6)"></div><div class="t ss" style="left:869px;top:691px">Python console</div><div class="a" style="left:963px;top:685px;width:116px;height:21px;border:1px solid #9c9c9c;border-top:none;background:#fff"></div><div class="t ss" style="left:976px;top:692px">IPython console</div><svg class="a" style="left:1244px;top:594px" width="116" height="80"><path d="M112 2Q111.5 1 113 1H116V56H113Q111.5 56 111.5 54Z" fill="#4a4c5a"/><path d="M110 46Q114 44 116 46V56Q113 56 110 53Z" fill="#7a5a40"/><path d="M11 44Q11 34 17 28L18 25Q19 23.5 20.5 25L23 28.5Q30 28 36 28L38 23.5Q39.2 21.5 40.5 23.5L43 28Q70 27 92 28.5Q111 30 111 49Q111 68 92 70.5L91.5 73L89 71Q60 72 26 71L24 73.5L21.5 70.5Q11 66 11 44Z" fill="#b3a294" stroke="#5a3a20" stroke-width="1.7" stroke-linejoin="round"/><path d="M84 29.5Q87 31.5 91 30.5M96 31.5Q99 34 103 33" fill="none" stroke="#8e7c6c" stroke-width="2"/><path d="M5 34H14M5 38.5H14M44 35L53 32M44 37L53 40" stroke="#5a3a20" stroke-width="1.1" fill="none"/><path d="M19 36.5L21.5 38L24 36.5M34 36.5L36.5 38L39 36.5" stroke="#5a3a20" stroke-width="1.2" fill="none"/><circle cx="28.5" cy="40" r="1.2" fill="#5a3a20"/><path d="M14 9H18L14.5 13.5H18.5M24 17H27.5L24.5 20.5H28" stroke="#4a4a4a" stroke-width="1.1" fill="none"/><rect x="67" y="38" width="1.8" height="2.2" fill="#5a3a20"/><rect x="67" y="42" width="1.8" height="3.4" fill="#5a3a20"/><path d="M69 52Q74 57 68 62.5Q62 63 62 62Q69 59 69 52Z" fill="#5a3a20"/><path d="M83 47L86.5 45.5Q89.5 47.5 92.5 45.5L96 47L94.5 50.5L93 50V56H86V50L84.5 50.5Z" fill="#5a3a20"/><path d="M25 62.5V65.5H27M92 62.5V65.5H94" stroke="#5a3a20" stroke-width="0.9" fill="none"/></svg><div class="t" style="left:1283px;top:645px;color:#6a4123;font-size:12px"><span class="cj yc">英</span></div><div class="a" style="left:1302px;top:99px;width:60px;height:59px;background:#f0f0f0;border:1px solid #7e7e7e"></div><div class="t" style="left:1310px;top:106px;font-size:13.5px;color:#222;letter-spacing:-0.45px">Poin...</div><div class="a" style="left:1345px;top:104px;width:18px;height:19px;border:1px solid #8e8e8e;border-radius:3px;background:linear-gradient(180deg,#f6f6f6,#dcdcdc)"></div><div class="a" style="left:1349px;top:108px;width:10px;height:10px;background:#9b9b9b;border-radius:2px"></div><svg class="a" style="left:1351px;top:110px" width="6" height="6"><path d="M0.5 0.5L5.5 5.5M5.5 0.5L0.5 5.5" stroke="#fff" stroke-width="1.4"/></svg><div class="a" style="left:1308px;top:125px;width:56px;height:27px;border:1px solid #4a4a4a;background:#f0f0f0"></div><div class="a" style="left:1310px;top:127px;width:54px;height:23px;border:1px solid #8a8a8a;border-radius:2px;background:linear-gradient(180deg,#f8f8f8 0%,#efefef 50%,#e2e2e2 55%,#dadada 88%,#8a8a8a 100%)"></div><div class="t" style="left:1324px;top:132px;font-size:13px"><span class="cj pf">开始</span></div>
<div class="a" style="left:0;top:706px;width:1360px;height:22px;background:#f0f0f0"></div><div class="a" style="left:843px;top:709px;width:1px;height:17px;background:#dcdcdc"></div><div class="a" style="left:844px;top:709px;width:1px;height:17px;background:#fcfcfc"></div><div class="a" style="left:973px;top:709px;width:1px;height:17px;background:#dcdcdc"></div><div class="a" style="left:974px;top:709px;width:1px;height:17px;background:#fcfcfc"></div><div class="a" style="left:1119px;top:709px;width:1px;height:17px;background:#dcdcdc"></div><div class="a" style="left:1120px;top:709px;width:1px;height:17px;background:#fcfcfc"></div><div class="a" style="left:1181px;top:709px;width:1px;height:17px;background:#dcdcdc"></div><div class="a" style="left:1182px;top:709px;width:1px;height:17px;background:#fcfcfc"></div><div class="a" style="left:1256px;top:709px;width:1px;height:17px;background:#dcdcdc"></div><div class="a" style="left:1257px;top:709px;width:1px;height:17px;background:#fcfcfc"></div><div class="sb" style="left:724px;letter-spacing:0.10px">Permissions:</div><div class="sb" style="left:849px;letter-spacing:0.30px">End-of-lines:</div><div class="sb" style="left:978px;letter-spacing:0.27px">Encoding:</div><div class="sb" style="left:1127px;letter-spacing:-0.20px">Line:</div><div class="sb" style="left:1189px;letter-spacing:0.10px">Column:</div><div class="sb" style="left:1263px;letter-spacing:0.45px">Memory:</div><div class="sb" style="left:802.7px;top:711.5px;transform:scaleX(0.900);transform-origin:0 0"><b>RW</b></div><div class="sb" style="left:928.4px;top:711.5px;transform:scaleX(0.770);transform-origin:0 0"><b>CRLF</b></div><div class="sb" style="left:1041.6px;top:711.5px;transform:scaleX(0.900);transform-origin:0 0"><b>UTF-8</b></div><div class="sb" style="left:1159.8px;top:711.5px;transform:scaleX(0.910);transform-origin:0 0"><b>11</b></div><div class="sb" style="left:1242.3px;top:711.5px;transform:scaleX(0.860);transform-origin:0 0"><b>1</b></div><div class="sb" style="left:1322.0px;top:711.5px;transform:scaleX(0.885);transform-origin:0 0"><b>23 %</b></div><div class="a" style="left:0;top:728px;width:1360px;height:40px;background:linear-gradient(90deg,#2373c7 0%,#2171c5 12%,#1d69be 26%,#175fb8 42%,#1259b6 58%,#0e51ae 68%,#0b49aa 80%,#0a46a8 100%)"></div><div class="a" style="left:0;top:728px;width:1360px;height:40px;background:linear-gradient(180deg,rgba(255,255,255,.35) 0,rgba(255,255,255,.10) 2px,rgba(255,255,255,0) 40%,rgba(0,0,30,.12) 100%)"></div><div class="a" style="left:0;top:728px;width:1360px;height:1px;background:#3a5f98"></div><svg class="a" style="left:880px;top:728px" width="130" height="40"><defs><linearGradient id="sw" x1="0" y1="0" x2="1" y2="1"><stop offset="0" stop-color="#fff" stop-opacity="0.05"/><stop offset="0.45" stop-color="#fff" stop-opacity="0.36"/><stop offset="1" stop-color="#fff" stop-opacity="0.12"/></linearGradient></defs><path d="M0 0H22Q78 10 108 40H74Q52 12 0 3Z" fill="url(#sw)"/></svg><svg class="a" style="left:6px;top:729px" width="40" height="40"><defs><radialGradient id="orb" cx="0.5" cy="0.35" r="0.7"><stop offset="0" stop-color="#6fbcf5"/><stop offset="0.5" stop-color="#2a7bd0"/><stop offset="0.85" stop-color="#123f86"/><stop offset="1" stop-color="#0c2c62"/></radialGradient></defs><circle cx="20" cy="19.5" r="18" fill="url(#orb)" stroke="#5b8fd0" stroke-opacity=".8" stroke-width="1"/><ellipse cx="20" cy="10" rx="13.5" ry="7.5" fill="#fff" opacity=".22"/><path d="M12 12.5Q15.5 10.5 19 12.5L17.8 19Q14.5 17.2 10.8 19Z" fill="#e8642c"/><path d="M20.6 13Q24 15.2 28.2 13L27 19.6Q23 21.6 19.4 19.5Z" fill="#8cc63f"/><path d="M10.4 20.6Q14 18.8 17.5 20.8L16.3 27.2Q12.8 25.2 9.2 27.2Z" fill="#3aa0e8"/><path d="M19 21.4Q22.8 23.6 26.8 21.4L25.6 27.8Q21.6 30 17.8 27.8Z" fill="#f9c21e"/></svg><svg class="a" style="left:73px;top:732px" width="33" height="33"><rect x="0.5" y="0.5" width="31.5" height="31.5" rx="6" fill="#fdfdfd"/><circle cx="10.5" cy="18.5" r="5" fill="none" stroke="#2d8cf0" stroke-width="3"/><circle cx="21.5" cy="18.5" r="5" fill="none" stroke="#2d8cf0" stroke-width="3"/><circle cx="16" cy="11.5" r="4.6" fill="none" stroke="#f0483e" stroke-width="2.8"/><path d="M11.5 17.5Q16 9.5 20.5 17.5" fill="none" stroke="#2d8cf0" stroke-width="3"/><rect x="12" y="30.5" width="8" height="2" fill="#e8523c"/></svg><svg class="a" style="left:135px;top:732px" width="33" height="33"><rect x="0.5" y="0.5" width="31.5" height="32" rx="5.5" fill="#1e1c19"/><path d="M23.5 9.5Q17.5 5.5 12 9.5Q7 14 9 21Q11.5 27 17.5 26.5Q23.5 26 24.5 19.5L21 17L18.5 19.5L15.5 16.5L12.5 19" fill="none" stroke="#f7b617" stroke-width="2.8" stroke-linejoin="round" stroke-linecap="round"/></svg><svg class="a" style="left:196px;top:732px" width="36" height="34"><path d="M3 19Q3 9 14 7.5Q26 6.5 27 14Q27.5 19 22.5 19.5Q19.5 20 20.5 23Q21.5 27.5 14.5 27.5Q3 27.5 3 19Z" fill="#e9eef6" stroke="#9fb2cc" stroke-width="1"/><circle cx="9" cy="16" r="2.3" fill="#e84c3a"/><circle cx="14" cy="12" r="2.3" fill="#f3b72a"/><circle cx="20.5" cy="12" r="2.2" fill="#4aa0e0"/><circle cx="10" cy="22" r="2.2" fill="#58b058"/><path d="M30.5 1.5L33 3.5L21.5 25.5Q20 28.5 18.5 29.5Q18 27.5 19.5 24.5Z" fill="#e0923c" stroke="#b56e22" stroke-width=".6"/><path d="M30.5 1.5L33 3.5L31 7.5L28.5 5.8Z" fill="#f1c9a0"/></svg><svg class="a" style="left:258px;top:732px" width="36" height="34"><circle cx="16" cy="16" r="11.5" fill="none" stroke="#1b8cf0" stroke-width="7"/><path d="M14 31.5Q9.5 31.5 9.5 27.5Q9.5 24 13.5 23.5Q15 19 20 19Q25 19 26.5 23Q31.5 22.5 32.5 27Q32.5 31.5 28 31.5Z" fill="#fff"/></svg><svg class="a" style="left:323px;top:733px" width="31" height="31"><g transform="scale(0.93)"><circle cx="16.5" cy="16.5" r="15.5" fill="#e33b2e"/><path d="M16.5 16.5L3.1 8.7A15.5 15.5 0 0 0 10 30.6Z" fill="#2da94f"/><path d="M16.5 16.5L10 30.6A15.5 15.5 0 0 0 31.3 11.8L16.5 11.8Z" fill="#fdd23a"/><path d="M3.1 8.7A15.5 15.5 0 0 1 31.3 11.8H16.5Z" fill="#e33b2e"/><path d="M16.5 16.5L3.1 8.7A15.5 15.5 0 0 0 9.6 30.4L16.5 22Z" fill="#2da94f"/><circle cx="16.5" cy="16.5" r="7.2" fill="#fff"/><circle cx="16.5" cy="16.5" r="5.7" fill="#4285f4"/></g></svg><div class="a" style="left:370px;top:729px;width:158px;height:39px;border:1px solid rgba(200,225,250,.85);border-bottom:none;border-radius:3px 3px 0 0;background:linear-gradient(90deg,rgba(255,255,255,.18),rgba(255,255,255,0) 60%,rgba(0,20,80,.10)),linear-gradient(180deg,#a6c6ea 0%,#86b0e0 45%,#5d95d4 52%,#6ea5dc 100%)"></div><svg class="a" style="left:384px;top:737px" width="23" height="22"><path d="M7 1.5L15.5 1L21.5 7.5L19.5 15.5L11 20L3 15L1 7.5Z" fill="#2b2b3a" stroke="#f4f6fa" stroke-width="1.6" stroke-linejoin="round"/><path d="M2.5 6.5L8 5.5L11.5 8L15 6.5L20.5 7L19.5 12.5L14 14.5L10.5 12L6 13.5L2.5 11.5Z" fill="#e8441c"/><path d="M15 6.5L20.5 7L19.8 11L14.5 11.5Z" fill="#f26a1e"/><path d="M11 10L7 1.5M11 10L15.5 1M11 10L21.5 7.5M11 10L19.5 15.5M11 10L11 20M11 10L3 15M11 10L1 7.5" stroke="#f4f6fa" stroke-width="1" fill="none" opacity=".9"/></svg><div class="t" style="left:415px;top:742.5px;font-size:12.5px;color:#fff;text-shadow:0 0 3px rgba(0,0,40,.55)">C:/Users/Admini...</div><div class="a" style="left:531px;top:729px;width:159px;height:39px;border:1px solid rgba(170,200,235,.7);border-bottom:none;border-radius:3px 3px 0 0;background:linear-gradient(90deg,rgba(255,255,255,.16),rgba(255,255,255,0) 55%,rgba(0,20,80,.12)),linear-gradient(180deg,#5f97d8 0%,#3c7ecb 45%,#2468bc 52%,#2a72c6 100%)"></div><svg class="a" style="left:540px;top:732px" width="33" height="33"><rect x="0.5" y="0.5" width="15.5" height="15.5" fill="#8ab6e6"/><rect x="16" y="0.5" width="16" height="15.5" fill="#9cc9a0"/><rect x="0.5" y="16" width="15.5" height="16" fill="#f6cf8c"/><rect x="16" y="16" width="16" height="16" fill="#cfd3cf"/><path d="M2.5 1.5L16.5 15" stroke="#e4503a" stroke-width="3.2"/><circle cx="17" cy="15.6" r="3.6" fill="#f04a1e"/></svg><div class="t" style="left:577px;top:742.5px;font-size:12.5px;color:#fff;text-shadow:0 0 3px rgba(0,0,40,.55)">Pointofix</div><svg class="a" style="left:557px;top:747px" width="14" height="21"><path d="M1 1V16.5L4.8 13L7.6 19.5L10 18.4L7.3 12.2H12.4Z" fill="#fff" stroke="#000" stroke-width="1"/></svg><div class="a" style="left:1352px;top:729px;width:8px;height:39px;background:linear-gradient(180deg,rgba(160,190,230,.45),rgba(120,160,215,.25));border-left:1px solid rgba(20,40,90,.6)"></div><svg class="a" style="left:1206px;top:740px" width="18" height="18"><circle cx="9" cy="9" r="7.6" fill="#1a1a1a" stroke="#e8e8e8" stroke-width="1.4"/><circle cx="9" cy="9" r="4.6" fill="#ee4a1e"/></svg><svg class="a" style="left:1232px;top:741px" width="16" height="16"><path d="M1 2.2Q8 -0.6 15 2.2Q15 11 8 15Q1 11 1 2.2Z" fill="#2b8fe8" stroke="#fff" stroke-width="1.5"/><path d="M4.2 5.6L8 8.8L11.8 5.6" fill="none" stroke="#fff" stroke-width="1.7"/></svg><svg class="a" style="left:1258px;top:741px" width="10" height="15"><path d="M1.2 4.2L7.6 10.2L4.6 13.4V1.2L7.6 4.4L1.2 10.6" fill="none" stroke="#fff" stroke-width="1.7"/></svg><svg class="a" style="left:1277px;top:740px" width="18" height="18"><rect x="3" y="2" width="10" height="13" rx="1.5" fill="none" stroke="#fff" stroke-width="1.6"/><rect x="6" y="0" width="1.6" height="3" fill="#fff"/><rect x="9" y="0" width="1.6" height="3" fill="#fff"/><rect x="9" y="5" width="7" height="6" fill="#fff"/><rect x="5" y="10" width="5" height="6" fill="#fff"/></svg><svg class="a" style="left:1303px;top:743px" width="17" height="12"><rect x="0.5" y="8.4" width="2.7" height="2.6" fill="#fff"/><rect x="4.2" y="5.7" width="2.7" height="5.3" fill="#fff"/><rect x="7.9" y="3.0" width="2.7" height="8.0" fill="#fff"/><rect x="11.6" y="0.3" width="2.7" height="10.7" fill="#fff"/></svg><svg class="a" style="left:1328px;top:740px" width="18" height="18"><path d="M1 6.5H4L8.5 2V16L4 11.5H1Z" fill="#fff"/><path d="M11 5.5Q13.5 9 11 12.5" fill="none" stroke="#fff" stroke-width="1.3"/></svg>
</body></html>
